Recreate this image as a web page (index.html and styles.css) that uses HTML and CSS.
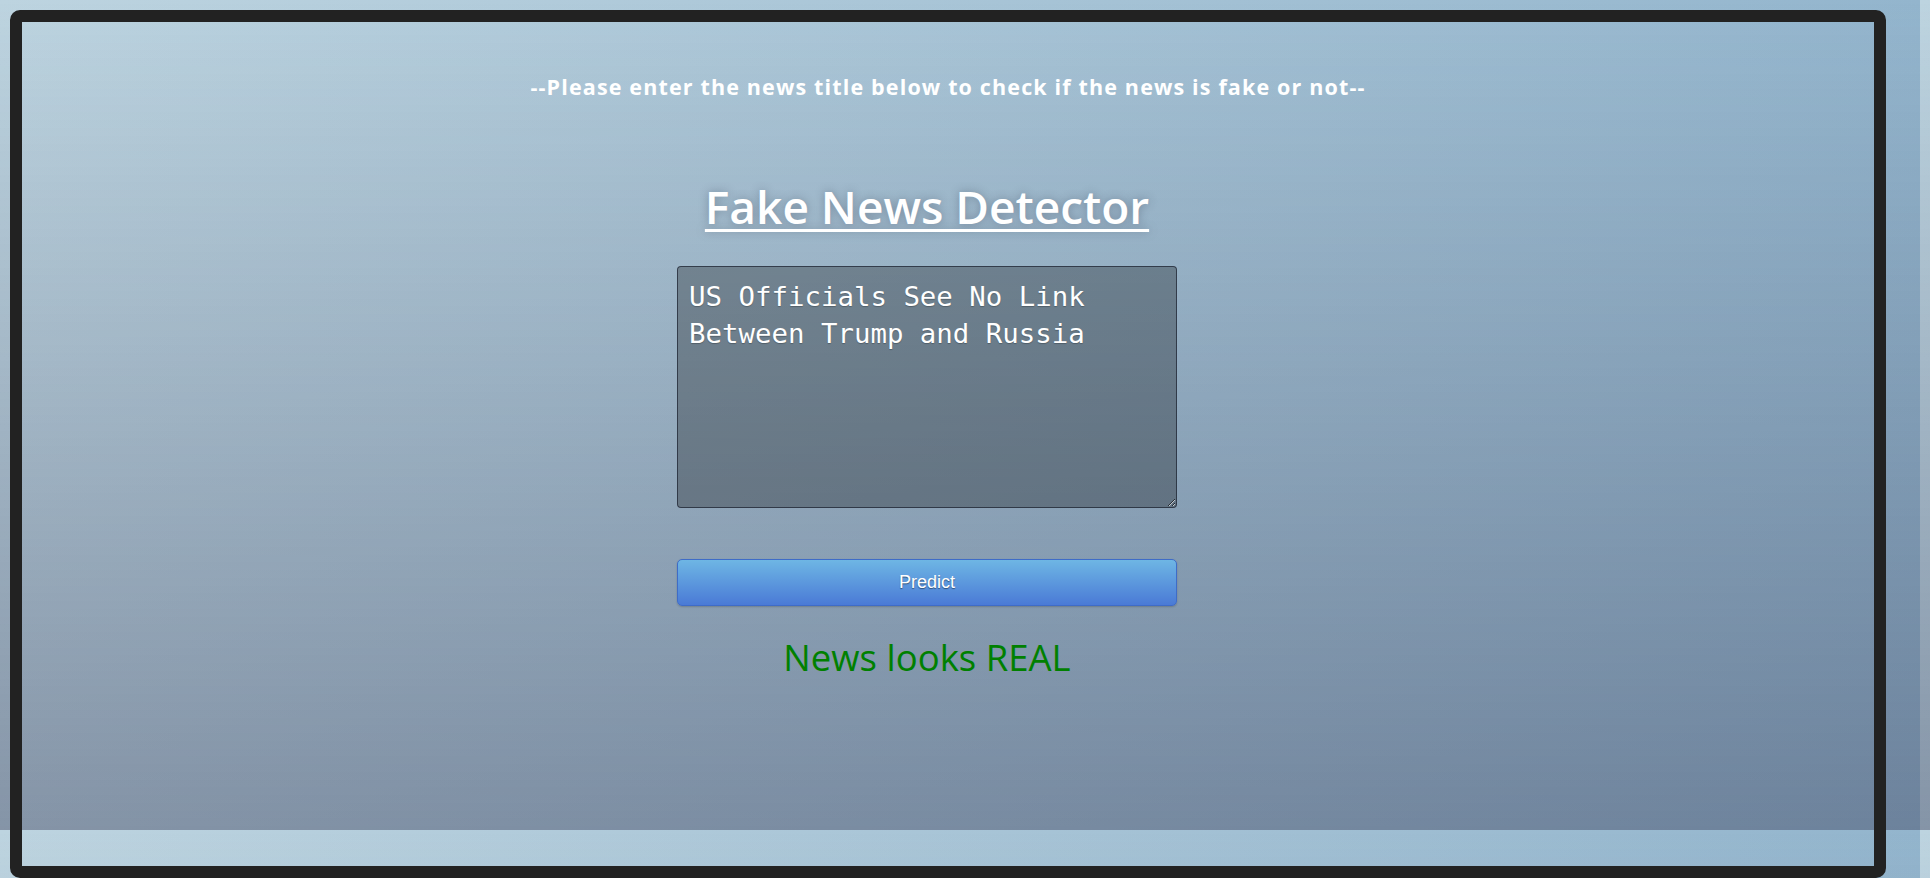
FILE: index.html
```html
<!DOCTYPE html>
<html lang="en">
<head>
<meta charset="utf-8">
<title>Fake News Detector</title>
<link rel="stylesheet" href="styles.css">
</head>
<body>
<div class="frame">
  <p class="intro">--Please enter the news title below to check if the news is fake or not--</p>
  <div class="stage">
    <h1 class="title">Fake News Detector</h1>
    <form class="form">
      <textarea class="news-input" name="news">US Officials See No Link Between Trump and Russia</textarea>
      <button type="button" class="predict">Predict</button>
    </form>
    <p class="result">News looks REAL</p>
  </div>
</div>
</body>
</html>
```
FILE: styles.css
```css
html {
  background-color: #a3b6c6;
  background-image:
    linear-gradient(to bottom, rgba(55, 60, 88, 0) 0%, rgba(55, 60, 88, 0.42) 100%),
    linear-gradient(to right, #bdd4e0 0%, #93b5cd 100%);
  background-size: 1920px 830px;
  background-repeat: repeat;
}

body {
  margin: 0;
  font-family: "Open Sans", "Noto Sans", sans-serif;
}

.frame {
  box-sizing: border-box;
  margin: 10px 0 0 10px;
  width: 1876px;
  height: 868px;
  border: 12px solid #222222;
  border-radius: 10px;
  padding-top: 51px;
}

.intro {
  margin: 0;
  text-align: center;
  color: #ffffff;
  font-weight: 700;
  font-size: 21.5px;
  letter-spacing: 1.15px;
  line-height: 28px;
}

.stage {
  display: flex;
  flex-direction: column;
  align-items: center;
  padding-right: 42px;
  margin-top: 75px;
}

.title {
  margin: 0;
  color: #ffffff;
  font-size: 46px;
  font-weight: 600;
  line-height: 60px;
  text-decoration: underline;
  text-decoration-thickness: 3px;
  text-underline-offset: 5px;
  text-shadow: 0 0 10px rgba(40, 50, 70, 0.35);
}

.form {
  margin-top: 30px;
  display: flex;
  flex-direction: column;
  width: 500px;
}

.news-input {
  box-sizing: border-box;
  width: 500px;
  height: 242px;
  margin: 0;
  padding: 11px 11px;
  font-family: "DejaVu Sans Mono", "Liberation Mono", monospace;
  font-size: 27.4px;
  line-height: 37.4px;
  color: #ffffff;
  background: rgba(0, 0, 0, 0.28);
  border: 1px solid rgba(25, 32, 45, 0.7);
  border-radius: 4px;
  text-shadow: 0 1px 1px rgba(0, 0, 0, 0.25);
}

.predict {
  box-sizing: border-box;
  margin-top: 51px;
  width: 500px;
  height: 47px;
  font-family: "Liberation Sans", Arial, sans-serif;
  font-size: 18px;
  color: #ffffff;
  text-shadow: 0 1px 1px rgba(0, 0, 0, 0.45);
  background: linear-gradient(to bottom, #6eb6e4 0%, #4a7ad6 100%);
  border: 1px solid #3e6cc8;
  border-radius: 5px;
  box-shadow: 0 1px 2px rgba(0, 0, 0, 0.2);
  cursor: pointer;
}

.result {
  margin: 27px 0 0;
  color: #008000;
  font-size: 36.5px;
  line-height: 48px;
}
```
